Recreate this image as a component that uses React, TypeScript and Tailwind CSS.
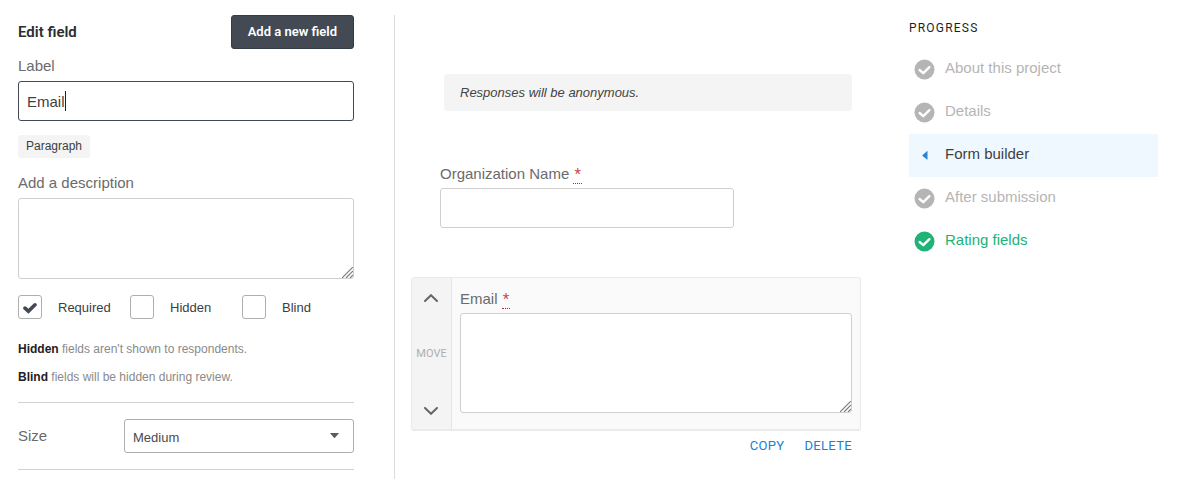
import type { ReactNode } from "react";

function ResizeGrip() {
  return (
    <svg
      className="pointer-events-none absolute right-px bottom-px"
      width="11"
      height="11"
      viewBox="0 0 11 11"
      fill="none"
      stroke="#7c7c7c"
      strokeWidth="1.2"
      aria-hidden="true"
    >
      <path d="M0 11 L11 0 M4 11 L11 4 M8 11 L11 8" />
    </svg>
  );
}

function FieldLabel({ htmlFor, children }: { htmlFor: string; children: ReactNode }) {
  return (
    <label htmlFor={htmlFor} className="block text-[15px] leading-5 text-[#6b6b6b]">
      {children}
    </label>
  );
}

function RequiredMark() {
  return (
    <abbr
      title="required"
      className="border-b border-dotted border-[#c22026] px-px font-[Roboto,sans-serif] text-[15px] leading-4 text-[#cf4a4f] no-underline"
    >
      *
    </abbr>
  );
}

function Tick({ id, label, checked = false }: { id: string; label: string; checked?: boolean }) {
  return (
    <label htmlFor={id} className="flex w-28 items-center gap-4 text-[13px] text-[#3b3e42]">
      <span className="relative size-6">
        <input
          id={id}
          type="checkbox"
          defaultChecked={checked}
          className="peer size-6 appearance-none rounded-[3px] border border-[#aeaeae] bg-white"
        />
        <svg
          className="pointer-events-none absolute top-[7px] left-[5px] hidden peer-checked:block"
          width="14"
          height="12"
          viewBox="0 0 14 12"
          fill="none"
          stroke="#434a54"
          strokeWidth="3.6"
          strokeLinecap="round"
          aria-hidden="true"
        >
          <path d="M2 6.2 L5.4 9.2 L12 2.8" />
        </svg>
      </span>
      <span className="pt-px">{label}</span>
    </label>
  );
}

function EditPanel() {
  return (
    <section className="mt-[15px] w-[377px] shrink-0 border-r border-[#dcdcdc] pr-10">
      <header className="flex items-center justify-between">
        <h2 className="font-[Roboto,sans-serif] text-[15px] font-semibold text-[#2b2d30]">Edit field</h2>
        <button
          type="button"
          className="h-[34px] rounded-[3px] border border-[#363c45] bg-[#434a54] px-4 font-[Roboto,sans-serif] text-[13px] font-semibold text-white"
        >
          Add a new field
        </button>
      </header>

      <div className="mt-[7px] flex flex-col gap-[5px]">
        <FieldLabel htmlFor="field-label">Label</FieldLabel>
        <div className="flex h-10 items-center rounded-[3px] border border-[#434a54] px-2">
          <input
            id="field-label"
            defaultValue="Email"
            className="field-sizing-content pt-[2px] text-[15px] text-[#3f3f3f] outline-none"
          />
          <span className="h-5 w-px bg-[#222222]" aria-hidden="true" />
        </div>
      </div>

      <span className="mt-[14px] block w-fit rounded-[3px] bg-[#f4f4f4] px-2 text-xs leading-[23px] text-[#3b3e42]">
        Paragraph
      </span>

      <div className="mt-[15px] flex flex-col gap-[5px]">
        <FieldLabel htmlFor="field-description">Add a description</FieldLabel>
        <div className="relative flex">
          <textarea
            id="field-description"
            className="h-[81px] w-full resize-none rounded-[3px] border border-[#cfcfcf] p-2 outline-none"
          />
          <ResizeGrip />
        </div>
      </div>

      <div className="mt-4 flex">
        <Tick id="required" label="Required" checked />
        <Tick id="hidden" label="Hidden" />
        <Tick id="blind" label="Blind" />
      </div>

      <div className="mt-5 flex flex-col gap-2 text-xs leading-5 text-[#8a8a8a]">
        <p>
          <strong className="text-[#1f2124]">Hidden</strong> fields aren't shown to respondents.
        </p>
        <p>
          <strong className="text-[#1f2124]">Blind</strong> fields will be hidden during review.
        </p>
      </div>

      <div className="mt-[15px] flex items-center border-y border-[#d3d3d3] py-4">
        <div className="w-[106px]">
          <FieldLabel htmlFor="field-size">Size</FieldLabel>
        </div>
        <div className="relative flex-1">
          <select
            id="field-size"
            defaultValue="Medium"
            className="block h-[34px] w-full appearance-none rounded-[3px] border border-[#aeaeae] bg-white px-2 pt-[3px] text-[13px] text-[#4a4a4a]"
          >
            <option>Small</option>
            <option>Medium</option>
            <option>Large</option>
          </select>
          <svg
            className="pointer-events-none absolute top-[14px] right-[15px]"
            width="9"
            height="5"
            viewBox="0 0 9 5"
            fill="#5c5c5c"
            aria-hidden="true"
          >
            <path d="M0.6 0 H8.4 Q9.2 0 8.7 0.6 L5 4.7 Q4.5 5.1 4 4.7 L0.3 0.6 Q-0.2 0 0.6 0 Z" />
          </svg>
        </div>
      </div>
    </section>
  );
}

function MoveButton({ label, d }: { label: string; d: string }) {
  return (
    <button type="button" aria-label={label} className="flex h-9 w-full items-center justify-center pr-px">
      <svg
        width="14"
        height="8"
        viewBox="0 0 14 8"
        fill="none"
        stroke="#666666"
        strokeWidth="2"
        strokeLinecap="round"
        aria-hidden="true"
      >
        <path d={d} />
      </svg>
    </button>
  );
}

function FormPreview() {
  return (
    <main className="min-w-0 flex-1 px-4 pt-[74px]">
      <p className="mr-[9px] ml-[33px] rounded-[3px] bg-[#f4f4f4] px-4 pt-px text-[13px] leading-9 text-[#444444] italic">
        Responses will be anonymous.
      </p>

      <div className="mt-[53px] ml-[29px] flex flex-col gap-1">
        <FieldLabel htmlFor="organization">
          Organization Name <RequiredMark />
        </FieldLabel>
        <input
          id="organization"
          className="h-10 w-[294px] rounded-[3px] border border-[#cfcfcf] px-2 outline-none"
        />
      </div>

      <div className="mt-[49px] flex rounded-[3px] border border-b-2 border-[#ebebeb] bg-[#fafafa]">
        <div className="flex w-10 flex-col items-center justify-between border-r border-[#e4e4e4] bg-[#f4f4f4] pt-[2px]">
          <MoveButton label="Move up" d="M1 7 L7 1.2 L13 7" />
          <span className="font-[Roboto,sans-serif] text-[11px] text-[#aeaeae]">MOVE</span>
          <MoveButton label="Move down" d="M1 1 L7 6.8 L13 1" />
        </div>
        <div className="flex flex-1 flex-col gap-1 px-2 pt-[11px] pb-4">
          <FieldLabel htmlFor="email">
            Email <RequiredMark />
          </FieldLabel>
          <div className="relative flex">
            <textarea
              id="email"
              className="h-[100px] w-full resize-none rounded-[3px] border border-[#cfcfcf] bg-white p-2 outline-none"
            />
            <ResizeGrip />
          </div>
        </div>
      </div>

      <div className="mt-[5px] flex justify-end gap-5 pr-[9px] font-[Roboto,sans-serif] text-[13px] leading-5 tracking-wide text-[#2080d0]">
        <button type="button">COPY</button>
        <button type="button">DELETE</button>
      </div>
    </main>
  );
}

function CheckCircle() {
  return (
    <svg width="21" height="21" viewBox="0 0 21 21" fill="none" aria-hidden="true">
      <circle cx="10.5" cy="10.5" r="10" fill="currentColor" />
      <path
        d="M5.6 11 L9.3 14.2 L15.4 8.2"
        stroke="#ffffff"
        strokeWidth="2.4"
        strokeLinecap="round"
        strokeLinejoin="round"
      />
    </svg>
  );
}

function CurrentArrow() {
  return (
    <svg width="21" height="21" viewBox="0 0 21 21" fill="#2684d8" aria-hidden="true">
      <path d="M13.5 6.4 V14.4 Q13.5 15 13 14.6 L8.6 10.9 Q8.1 10.4 8.6 9.9 L13 6.2 Q13.5 5.8 13.5 6.4 Z" />
    </svg>
  );
}

type Step = { name: string; state: "idle" | "current" | "done" };

const steps: Step[] = [
  { name: "About this project", state: "idle" },
  { name: "Details", state: "idle" },
  { name: "Form builder", state: "current" },
  { name: "After submission", state: "idle" },
  { name: "Rating fields", state: "done" },
];

const stepStyles = {
  idle: "text-[#b5b5b5]",
  current: "bg-[#f0f8ff] text-[#3f3f3f]",
  done: "text-[#20b276]",
};

function Progress() {
  return (
    <nav className="ml-8 w-[270px] shrink-0 pt-[18px] pr-[21px]">
      <h2 className="font-[Roboto,sans-serif] text-xs leading-5 tracking-widest text-[#1f1f1f]">PROGRESS</h2>
      <ul className="mt-[10px]">
        {steps.map((step) => (
          <li key={step.name}>
            <a
              href="#"
              className={`flex h-[43px] items-center gap-[10px] pl-[5px] text-[15px] ${stepStyles[step.state]}`}
            >
              {step.state === "current" ? <CurrentArrow /> : <CheckCircle />}
              <span className="pb-[2px]">{step.name}</span>
            </a>
          </li>
        ))}
      </ul>
    </nav>
  );
}

export default function App() {
  return (
    <div className="flex min-h-screen bg-white pl-[18px] font-['Liberation_Sans',Arial,sans-serif]">
      <EditPanel />
      <FormPreview />
      <Progress />
    </div>
  );
}
